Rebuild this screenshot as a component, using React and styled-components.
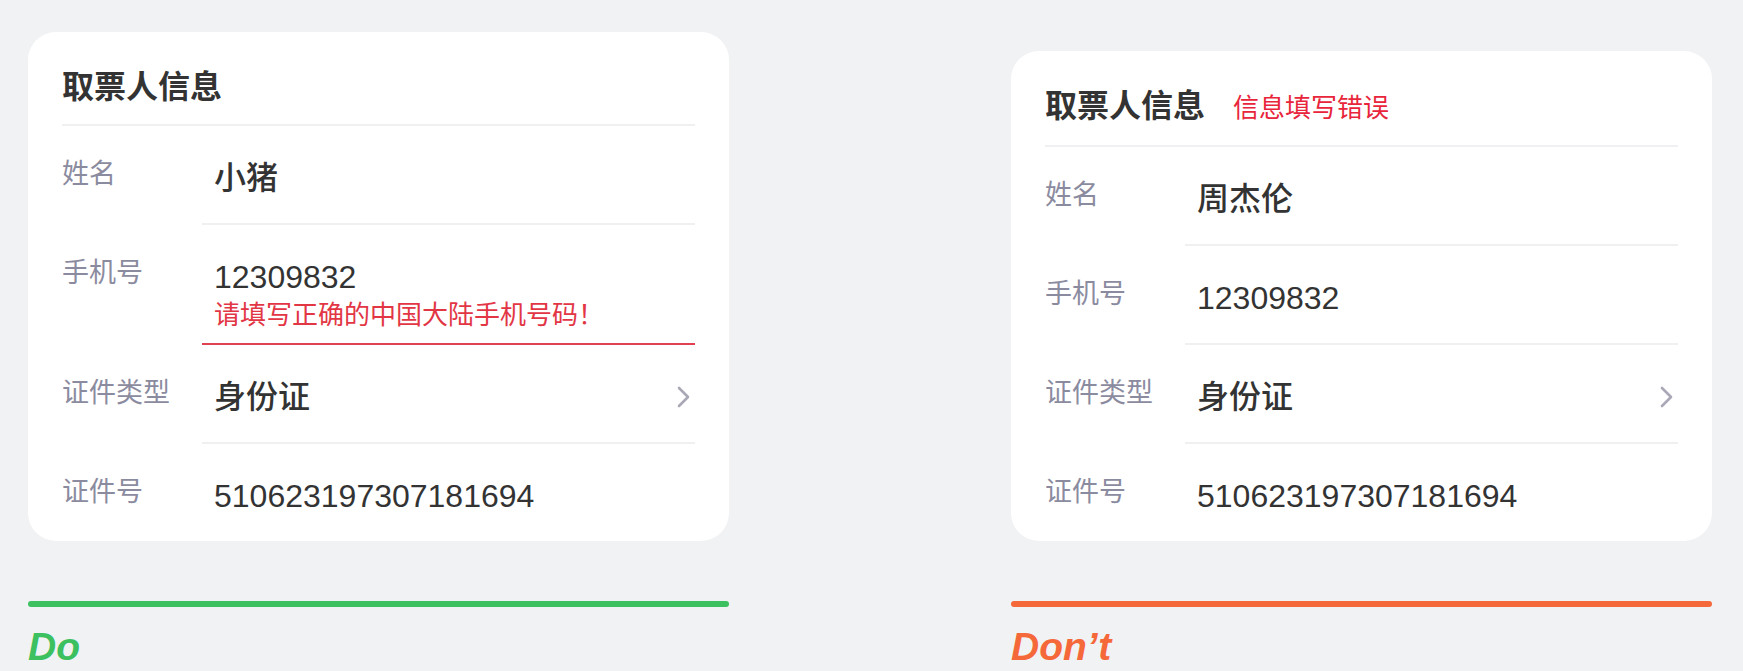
import React from 'react';
import styled, { createGlobalStyle } from 'styled-components';

const GlobalStyle = createGlobalStyle`
	html, body {
		margin: 0;
		padding: 0;
		background: #f1f2f4;
	}
	body {
		font-family: "Liberation Sans", "Noto Sans CJK SC", sans-serif;
		color: #333;
	}
`;

const Page = styled.div`
	display: flex;
	justify-content: space-between;
	padding: 0 31px 0 28px;
`;

const Column = styled.div`
	flex: 0 0 701px;
	display: flex;
	flex-direction: column;
`;

const CardSlot = styled.div`
	height: 541px;
	display: flex;
	flex-direction: column;
	justify-content: flex-end;
`;

const Card = styled.div`
	background: #fff;
	border-radius: 28px;
	padding: 0 34px;
`;

const Header = styled.div`
	display: flex;
	align-items: baseline;
	padding: 35px 0 17px;
	border-bottom: 2px solid #f0f0f2;
`;

const Title = styled.div`
	font-size: 32px;
	line-height: 40px;
	font-weight: 600;
	color: #333;
`;

const Hint = styled.div`
	margin-left: 28px;
	font-size: 26px;
	line-height: 40px;
	color: #e8253b;
`;

const Row = styled.div`
	display: flex;
	align-items: flex-start;
`;

const Label = styled.div`
	flex: 0 0 140px;
	padding-top: 30px;
	font-size: 27px;
	line-height: 36px;
	color: #8b8ba0;
`;

const Field = styled.div`
	flex: 1;
	padding: 30px 0 ${({ $error }) => ($error ? '12px' : '23px')} 12px;
	border-bottom: ${({ $last, $error }) =>
		$last ? 'none' : $error ? '2px solid #e0404f' : '2px solid #f0f0f2'};
`;

const ValueLine = styled.div`
	display: flex;
	align-items: center;
	justify-content: space-between;
`;

const Value = styled.div`
	font-size: 32px;
	line-height: 44px;
	font-weight: 500;
	color: #333;
`;

const ErrorText = styled.div`
	font-size: 26px;
	line-height: 32px;
	color: #e23645;
`;

const Chevron = styled.svg`
	width: 13px;
	height: 22px;
	margin-right: 5px;
	flex-shrink: 0;
`;

const Bar = styled.div`
	margin-top: 60px;
	height: 6px;
	border-radius: 3px;
	background: ${({ $tone }) => $tone};
`;

const Verdict = styled.div`
	margin-top: 16px;
	font-size: 39px;
	line-height: 48px;
	font-weight: 700;
	font-style: italic;
	color: ${({ $tone }) => $tone};
`;

const Arrow = () => (
	<Chevron viewBox="0 0 13 22">
		<polyline
			points="2,2 11,11 2,20"
			fill="none"
			stroke="#a8a8b6"
			strokeWidth="2.6"
			strokeLinecap="round"
			strokeLinejoin="round"
		/>
	</Chevron>
);

const InfoCard = ({ name, hint, phoneError }) => (
	<Card>
		<Header>
			<Title>取票人信息</Title>
			{hint && <Hint>{hint}</Hint>}
		</Header>
		<Row>
			<Label>姓名</Label>
			<Field>
				<Value>{name}</Value>
			</Field>
		</Row>
		<Row>
			<Label>手机号</Label>
			<Field $error={!!phoneError}>
				<Value>12309832</Value>
				{phoneError && <ErrorText>{phoneError}</ErrorText>}
			</Field>
		</Row>
		<Row>
			<Label>证件类型</Label>
			<Field>
				<ValueLine>
					<Value>身份证</Value>
					<Arrow />
				</ValueLine>
			</Field>
		</Row>
		<Row>
			<Label>证件号</Label>
			<Field $last>
				<Value>510623197307181694</Value>
			</Field>
		</Row>
	</Card>
);

const App = () => (
	<>
		<GlobalStyle />
		<Page>
			<Column>
				<CardSlot>
					<InfoCard name="小猪" phoneError="请填写正确的中国大陆手机号码！" />
				</CardSlot>
				<Bar $tone="#3cc060" />
				<Verdict $tone="#3cc060">Do</Verdict>
			</Column>
			<Column>
				<CardSlot>
					<InfoCard name="周杰伦" hint="信息填写错误" />
				</CardSlot>
				<Bar $tone="#f5683a" />
				<Verdict $tone="#f5683a">Don’t</Verdict>
			</Column>
		</Page>
	</>
);

export default App;
